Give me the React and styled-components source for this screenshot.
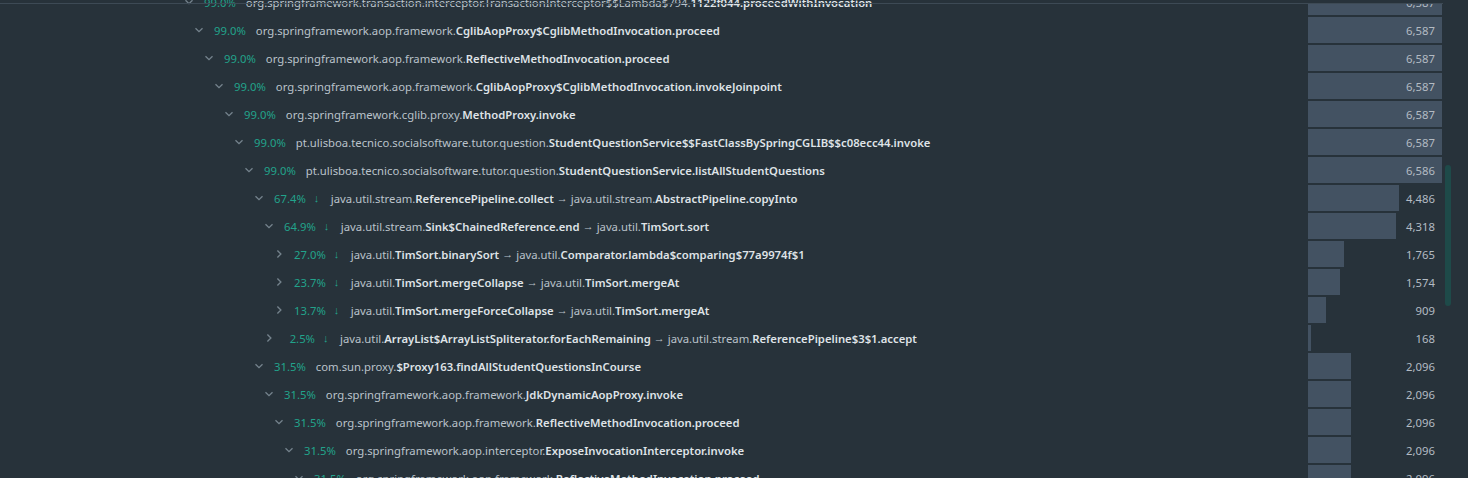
import React from 'react';
import styled, {createGlobalStyle} from 'styled-components';

const MAX = 6587;

const GlobalStyle = createGlobalStyle`
  html, body {
    margin: 0;
    padding: 0;
    background: #27323a;
    overflow: hidden;
  }
  body {
    font-family: "Noto Sans", "Open Sans", sans-serif;
    font-size: 11.3px;
  }
`

const Page = styled.div`
  position: relative;
  width: 1468px;
  height: 478px;
  overflow: hidden;
  background: #27323a;
`

const List = styled.div`
  display: flex;
  flex-direction: column;
  margin-top: -12px;
`

const Row = styled.div`
  display: flex;
  align-items: center;
  height: 28px;
  padding-right: 26px;
`

const Node = styled.div`
  flex: 1;
  display: flex;
  align-items: center;
  padding-left: ${p => 183 + p.depth * 10}px;
  white-space: nowrap;
  color: #bac2ca;
`

const Toggle = styled.span`
  display: inline-flex;
  align-items: center;
  justify-content: center;
  width: 12px;
  height: 12px;
  margin-right: 9px;
  color: #75838d;
`

const Percent = styled.span`
  display: inline-block;
  min-width: 31px;
  text-align: right;
  color: #22a38b;
  margin-right: 10px;
`

const Down = styled.span`
  display: inline-block;
  width: 17px;
  margin-left: -2px;
  color: #22a38b;
  font-family: "Liberation Sans", sans-serif;
  font-size: 11px;
`

const Pkg = styled.span`
  color: #bac2ca;
`

const Name = styled.span`
  color: #dfe3e7;
  font-weight: 600;
`

const Arrow = styled.span`
  color: #bac2ca;
  margin: 0 3px;
  font-family: "Liberation Sans", sans-serif;
  font-size: 11px;
`

const Cell = styled.div`
  position: relative;
  width: 134px;
  height: 26px;
  display: flex;
  align-items: center;
  justify-content: flex-end;
  padding-right: 7px;
  box-sizing: border-box;
  color: #b3bbc3;
`

const Fill = styled.div`
  position: absolute;
  left: 0;
  top: 0;
  bottom: 0;
  background: #435262;
`

const Count = styled.span`
  position: relative;
`

const TopLine = styled.div`
  position: absolute;
  left: 0;
  top: 3px;
  width: 1443px;
  height: 1px;
  background: #3d4a55;
`

const TopMask = styled.div`
  position: absolute;
  left: 1300px;
  top: 0;
  width: 143px;
  height: 3px;
  background: #27323a;
`

const Scroll = styled.div`
  position: absolute;
  left: 1445px;
  top: 165px;
  width: 6px;
  height: 141px;
  border-radius: 3px;
  background: #1e4a49;
`

const Chevron = ({open}) => (
  <svg width="10" height="10" viewBox="0 0 10 10" fill="none" stroke="currentColor" strokeWidth="1.3">
    {open ? <path d="M1.5 3.2 L5 6.7 L8.5 3.2"/> : <path d="M3.4 1.5 L6.9 5 L3.4 8.5"/>}
  </svg>
)

const Frame = ({f}) => {
  const i = f.lastIndexOf('.', f.lastIndexOf('.') - 1);
  return <><Pkg>{f.slice(0, i + 1)}</Pkg><Name>{f.slice(i + 1)}</Name></>
}

const rows = [
  {d: 0, p: '99.0%', f: ['org.springframework.transaction.interceptor.TransactionInterceptor$$Lambda$794.1122f044.proceedWithInvocation'], v: 6587},
  {d: 1, p: '99.0%', f: ['org.springframework.aop.framework.CglibAopProxy$CglibMethodInvocation.proceed'], v: 6587},
  {d: 2, p: '99.0%', f: ['org.springframework.aop.framework.ReflectiveMethodInvocation.proceed'], v: 6587},
  {d: 3, p: '99.0%', f: ['org.springframework.aop.framework.CglibAopProxy$CglibMethodInvocation.invokeJoinpoint'], v: 6587},
  {d: 4, p: '99.0%', f: ['org.springframework.cglib.proxy.MethodProxy.invoke'], v: 6587},
  {d: 5, p: '99.0%', f: ['pt.ulisboa.tecnico.socialsoftware.tutor.question.StudentQuestionService$$FastClassBySpringCGLIB$$c08ecc44.invoke'], v: 6587},
  {d: 6, p: '99.0%', f: ['pt.ulisboa.tecnico.socialsoftware.tutor.question.StudentQuestionService.listAllStudentQuestions'], v: 6586},
  {d: 7, p: '67.4%', down: true, f: ['java.util.stream.ReferencePipeline.collect', 'java.util.stream.AbstractPipeline.copyInto'], v: 4486},
  {d: 8, p: '64.9%', down: true, f: ['java.util.stream.Sink$ChainedReference.end', 'java.util.TimSort.sort'], v: 4318},
  {d: 9, p: '27.0%', down: true, closed: true, f: ['java.util.TimSort.binarySort', 'java.util.Comparator.lambda$comparing$77a9974f$1'], v: 1765},
  {d: 9, p: '23.7%', down: true, closed: true, f: ['java.util.TimSort.mergeCollapse', 'java.util.TimSort.mergeAt'], v: 1574},
  {d: 9, p: '13.7%', down: true, closed: true, f: ['java.util.TimSort.mergeForceCollapse', 'java.util.TimSort.mergeAt'], v: 909},
  {d: 8, p: '2.5%', down: true, closed: true, f: ['java.util.ArrayList$ArrayListSpliterator.forEachRemaining', 'java.util.stream.ReferencePipeline$3$1.accept'], v: 168},
  {d: 7, p: '31.5%', f: ['com.sun.proxy.$Proxy163.findAllStudentQuestionsInCourse'], v: 2096},
  {d: 8, p: '31.5%', f: ['org.springframework.aop.framework.JdkDynamicAopProxy.invoke'], v: 2096},
  {d: 9, p: '31.5%', f: ['org.springframework.aop.framework.ReflectiveMethodInvocation.proceed'], v: 2096},
  {d: 10, p: '31.5%', f: ['org.springframework.aop.interceptor.ExposeInvocationInterceptor.invoke'], v: 2096},
  {d: 11, p: '31.5%', f: ['org.springframework.aop.framework.ReflectiveMethodInvocation.proceed'], v: 2096},
]

const App = () => (
  <Page>
    <GlobalStyle/>
    <List>
      {rows.map((r, i) => (
        <Row key={i}>
          <Node depth={r.d}>
            <Toggle><Chevron open={!r.closed}/></Toggle>
            <Percent>{r.p}</Percent>
            {r.down && <Down>↓</Down>}
            <Frame f={r.f[0]}/>
            {r.f[1] && <><Arrow>→</Arrow><Frame f={r.f[1]}/></>}
          </Node>
          <Cell>
            <Fill style={{width: Math.round(134 * r.v / MAX) + 'px'}}/>
            <Count>{r.v.toLocaleString('en-US')}</Count>
          </Cell>
        </Row>
      ))}
    </List>
    <TopMask/>
    <TopLine/>
    <Scroll/>
  </Page>
)

export default App;
